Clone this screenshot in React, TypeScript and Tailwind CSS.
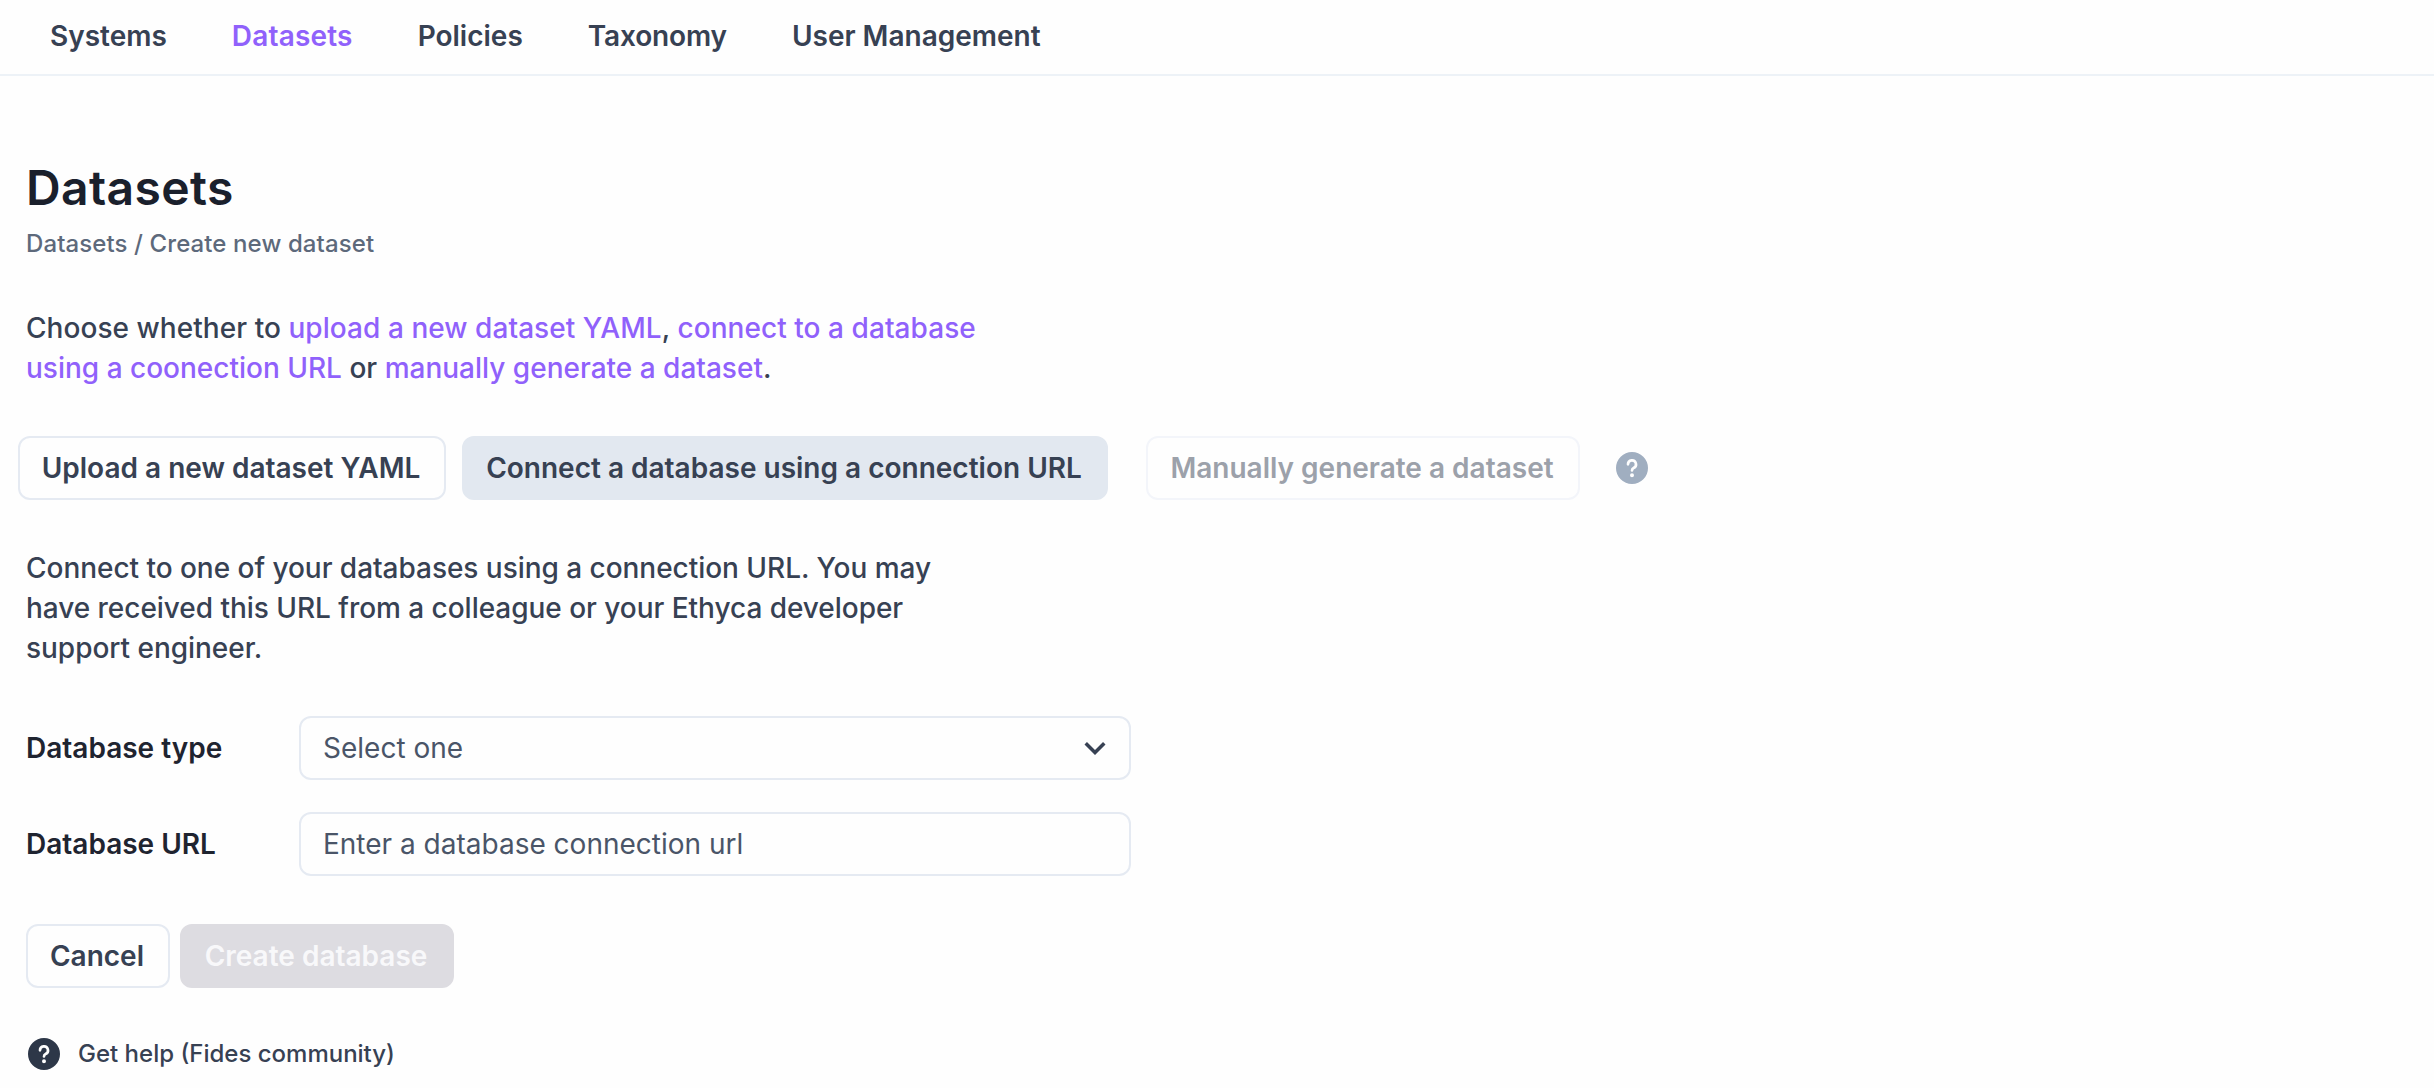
import React from "react";

const QUESTION_PATH =
  "M12,0A12,12,0,1,0,24,12,12.013,12.013,0,0,0,12,0Zm0,19a1.5,1.5,0,1,1,1.5-1.5A1.5,1.5,0,0,1,12,19Zm1.6-6.08a1,1,0,0,0-.6.917,1,1,0,1,1-2,0,3,3,0,0,1,1.8-2.75A2,2,0,1,0,10,9.255a1,1,0,1,1-2,0,4,4,0,1,1,5.6,3.666Z";

function QuestionIcon({ className }: { className: string }) {
  return (
    <svg viewBox="0 0 24 24" className={className} fill="currentColor" aria-hidden="true">
      <path d={QUESTION_PATH} />
    </svg>
  );
}

function ChevronDownIcon() {
  return (
    <svg viewBox="0 0 24 24" className="size-[42px] text-[#374153]" fill="currentColor" aria-hidden="true">
      <path d="M16.59 8.59L12 13.17 7.41 8.59 6 10l6 6 6-6z" />
    </svg>
  );
}

const NAV = [
  { label: "Systems", className: "" },
  { label: "Datasets", className: "tracking-[0.18px] text-[#9061fb]" },
  { label: "Policies", className: "" },
  { label: "Taxonomy", className: "tracking-[-0.15px]" },
  { label: "User Management", className: "" },
];

const BUTTON = "flex h-16 items-center justify-center rounded-xl border-2 pr-0.5 font-semibold whitespace-nowrap";

function Accent({ children }: { children: React.ReactNode }) {
  return <span className="text-[#9061fb]">{children}</span>;
}

export default function App() {
  return (
    <div className="h-[1088px] w-full overflow-hidden bg-[#fefefe] font-['Inter',sans-serif] text-[28px] leading-10 text-[#374153]">
      <nav className="flex h-19 items-center gap-[17px] border-b-2 border-[#edf2f7] pl-[26px] pb-0.5">
        {NAV.map((item) => (
          <a key={item.label} className={`px-6 font-semibold ${item.className}`}>
            {item.label}
          </a>
        ))}
      </nav>

      <main className="flex flex-col items-start pl-[26px] pt-20">
        <h1 className="text-5xl leading-[64px] font-semibold tracking-[0.4px] text-[#1a202c]">Datasets</h1>
        <div className="mt-1.5 text-2xl leading-9 font-medium tracking-[0.1px] text-[#5d697b]">
          Datasets / Create new dataset
        </div>

        <p className="mt-[46px] font-medium whitespace-nowrap">
          <span className="tracking-[0.055px]">
            Choose whether to <Accent>upload a new dataset YAML</Accent>, <Accent>connect to a database</Accent>
          </span>
          <br />
          <Accent>using a coonection URL</Accent> or <Accent>manually generate a dataset</Accent>.
        </p>

        <div className="mt-12 -ml-2 flex items-center">
          <button className={`${BUTTON} w-[428px] border-[#e5eaf2]`}>Upload a new dataset YAML</button>
          <button className={`${BUTTON} ml-4 w-[646px] border-[#e2e8f0] bg-[#e2e8f0]`}>
            Connect a database using a connection URL
          </button>
          <button className={`${BUTTON} ml-[38px] w-[434px] border-[#f3f5fa] text-[#9ca1aa]`}>
            Manually generate a dataset
          </button>
          <QuestionIcon className="ml-9 size-8 text-[#a0aec0]" />
        </div>

        <p className="mt-12 font-medium tracking-[-0.035px] whitespace-nowrap">
          Connect to one of your databases using a connection URL. You may
          <br />
          have received this URL from a colleague or your Ethyca developer
          <br />
          support engineer.
        </p>

        <form className="mt-12 flex flex-col gap-8">
          <div className="flex items-center">
            <label className="w-[273px] font-semibold text-[#1f2430]">Database type</label>
            <div className="flex h-16 w-[832px] items-center justify-between rounded-xl border-2 border-[#e5eaf2] pr-[13px] pl-[22px] text-[#4a5568]">
              <span>Select one</span>
              <ChevronDownIcon />
            </div>
          </div>
          <div className="flex items-center">
            <label className="w-[273px] font-semibold text-[#1f2430]">Database URL</label>
            <div className="flex h-16 w-[832px] items-center rounded-xl border-2 border-[#e5eaf2] pl-[22px] text-[#4a5568]">
              Enter a database connection url
            </div>
          </div>
        </form>

        <div className="mt-12 flex gap-2.5">
          <button className={`${BUTTON} w-36 border-[#e5eaf2]`}>Cancel</button>
          <button className={`${BUTTON} w-[274px] border-[#dddce1] bg-[#dddce1] text-[#f8f8fa]`}>
            Create database
          </button>
        </div>

        <a className="mt-12 flex items-center gap-[18px] pl-0.5 text-2xl leading-9 font-medium">
          <QuestionIcon className="size-8 text-[#2d3748]" />
          Get help (Fides community)
        </a>
      </main>
    </div>
  );
}
